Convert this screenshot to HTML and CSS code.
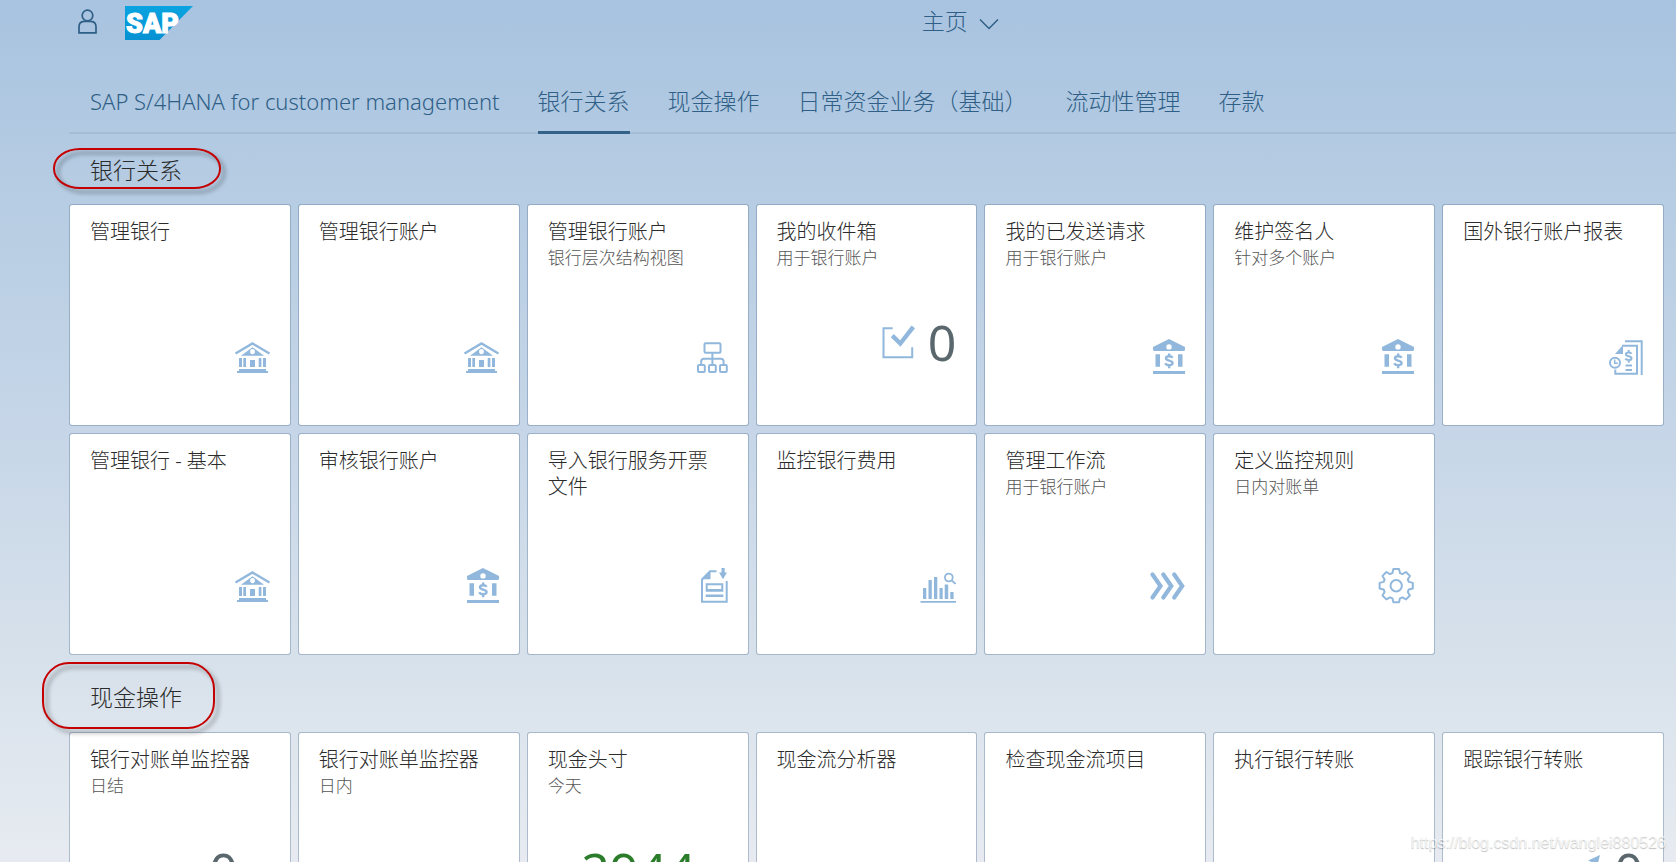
FILE: index.html
```html
<!DOCTYPE html>
<html lang="zh-CN">
<head>
<meta charset="utf-8">
<title>主页</title>
<link rel="stylesheet" href="styles.css">
</head>
<body>
<svg class="sprite" aria-hidden="true">
  <symbol id="bank" viewBox="0 0 36 36">
    <path d="M1.5 14.5 18.5 4.5 35.5 14.5" fill="none" stroke="currentColor" stroke-width="2.4"/>
    <path fill="currentColor" fill-rule="evenodd" d="M7 16.7 18.5 8.2 30 16.7ZM18.5 10a2.4 2.6 0 1 0 0 5.2 2.4 2.6 0 0 0 0-5.2ZM5 19h3v9H5ZM9.3 19h2.7v9H9.3ZM16 21h5v7h-5ZM24.7 19h2.7v9h-2.7ZM29 19h3v9h-3ZM5 30h27v2h2v2H3v-2h2Z"/>
  </symbol>
  <symbol id="bank-dollar" viewBox="0 0 36 36">
    <path fill="currentColor" fill-rule="evenodd" d="M20 0 36 8v2.500Q36 12 34.500 12h-29Q4 12 4 10.500V8ZM20 5.200a2.700 2.700 0 1 0 0 5.400 2.700 2.700 0 0 0 0-5.400ZM6.500 15.300H11v12.400H6.500ZM29 15.300h4.500v12.400H29ZM4 32h32v3H4Z"/>
    <path fill="none" stroke="currentColor" stroke-width="2.400" d="M23.600 18.800C22.500 16.700 17.200 16.500 17 19.200 16.900 22.200 23.700 20.900 23.600 24 23.400 27 17.400 26.700 16.200 24.300M20.200 14.500v2.500M20.200 26v3.200"/>
  </symbol>
  <symbol id="hierarchy" viewBox="0 0 36 36">
    <g fill="none" stroke="currentColor" stroke-width="2">
      <rect x="12.500" y="4.300" width="16" height="9.400" rx="1"/>
      <rect x="6" y="26" width="6.800" height="7" rx="1"/><rect x="17" y="26" width="6.800" height="7" rx="1"/><rect x="28" y="26" width="6.800" height="7" rx="1"/>
      <path d="M20.400 13.700V26M9.200 26v-3.500q0-2.800 2.800-2.800h16.800q2.800 0 2.800 2.800V26"/>
    </g>
  </symbol>
  <symbol id="task" viewBox="0 0 36 36">
    <path fill="none" stroke="currentColor" stroke-width="2" d="M12.700 4.300H3.500v29h28.700v-10"/>
    <path fill="none" stroke="currentColor" stroke-width="4.400" d="M12.300 11.700 20.300 19.500 33.300 2.800"/>
  </symbol>
  <symbol id="report" viewBox="0 0 36 36">
    <g fill="none" stroke="currentColor" stroke-width="2">
      <path d="M18 2.300h16.700V36M15 6.800h15v28H8.300v-4.200"/>
      <circle cx="8" cy="23.700" r="5"/><path stroke-width="1.500" d="M7.700 20.500v3.700h3.200"/>
      <path d="M18.500 26.500h6.500M18.500 31h6.500"/>
      <path d="M24.500 14.700C23.600 13 19.100 12.900 18.900 15.200 18.800 17.700 24.600 16.700 24.500 19.300 24.300 21.800 19.300 21.500 18.300 19.500M21.700 11v2M21.700 21v2.700"/>
    </g>
    <path fill="currentColor" d="M16 6v9H8Z"/>
  </symbol>
  <symbol id="import" viewBox="0 0 36 36">
    <path fill="none" stroke="currentColor" stroke-width="2" d="M24.500 3.200H18L10 11.500v22.300h24.700V13"/>
    <path fill="currentColor" d="M18.500 3v8.300H9.500ZM29.500 0h3.200v4.500H35L31 11.300 27 4.500h2.500ZM13.700 26.500h17.600V29H13.700Z"/>
    <path fill="currentColor" fill-rule="evenodd" d="M13.700 15.300h17.600v8.400H13.700ZM15.700 17.300v3.700h13.600v-3.700Z"/>
  </symbol>
  <symbol id="chart" viewBox="0 0 36 36">
    <path fill="currentColor" d="M3 20h3.300v11H3ZM8.500 12h3.300v19H8.500ZM14 9h3.300v22H14ZM19.500 20h3.200v11h-3.200ZM24.700 16.500h3.500V31h-3.500ZM30.300 24h3.300v7h-3.300ZM.5 33H36v1.800H.5Z"/>
    <g fill="none" stroke="currentColor" stroke-width="1.800"><circle cx="28.800" cy="9.500" r="3.900"/><path d="M31.600 12.300 35.500 15.800"/></g>
  </symbol>
  <symbol id="process" viewBox="0 0 36 36">
    <path fill="none" stroke="currentColor" stroke-width="4.200" stroke-linecap="round" d="M3.500 6.500 11.500 18 3.500 29.500M14.300 6.500 22.300 18 14.300 29.500M25.200 6.500 33.200 18 25.200 29.500"/>
  </symbol>
  <symbol id="gear" viewBox="0 0 36 36">
    <g transform="translate(18.200 17.700)" fill="none" stroke="currentColor" stroke-width="2" stroke-linejoin="round">
      <path d="M-3.800-12.600-2.800-16.600H2.800L3.800-12.600 6.200-11.600 9.800-13.700 13.700-9.800 11.600-6.200 12.600-3.800 16.600-2.800V2.800L12.600 3.800 11.600 6.200 13.700 9.800 9.800 13.700 6.200 11.600 3.800 12.600 2.800 16.600H-2.800L-3.800 12.600-6.200 11.600-9.800 13.700-13.700 9.800-11.600 6.200-12.600 3.800-16.600 2.800V-2.800L-12.600-3.800-11.600-6.200-13.700-9.800-9.800-13.700-6.200-11.600Z"/>
      <circle r="5.700"/>
    </g>
  </symbol>
  <symbol id="track" viewBox="0 0 36 36">
    <path fill="currentColor" d="M34 3 30.500 17l-2.500-6-6-2.500Z"/>
    <path fill="none" stroke="currentColor" stroke-width="2" d="M28 11 8 31"/>
  </symbol>
</svg>

<div class="shell">
  <header class="topbar">
    <div class="topbar-start">
      <button class="icon-button" type="button" aria-label="用户">
        <svg class="user-icon" viewBox="0 0 19 25"><g fill="none" stroke="currentColor" stroke-width="1.700"><circle cx="9.500" cy="6.500" r="5.300"/><path d="M1 23.800v-6Q1 12.800 6 12.300h7q5 .5 5 5.500v6Z"/></g></svg>
      </button>
      <a class="logo-link" href="#home" aria-label="SAP">
        <svg class="logo" viewBox="0 0 68 34">
          <defs><linearGradient id="logo-fill" x1="0" y1="0" x2="0" y2="1"><stop offset="0" stop-color="#0aa3e0"/><stop offset="1" stop-color="#0691d2"/></linearGradient></defs>
          <path fill="url(#logo-fill)" d="M0 0h68L34.500 34H0Z"/>
          <text class="logo-text" x="1" y="27">SAP</text>
        </svg>
      </a>
    </div>
    <button class="page-menu" type="button">主页
      <svg class="chevron" viewBox="0 0 20 12"><path fill="none" stroke="currentColor" stroke-width="1.500" d="M1 1.500 10 10.500 19 1.500"/></svg>
    </button>
  </header>

  <nav class="tabs">
    <a class="tab tab-latin" lang="en" href="#s4hana">SAP S/4HANA for customer management</a>
    <a class="tab tab-active" href="#bank-relations" aria-current="page">银行关系</a>
    <a class="tab" href="#cash">现金操作</a>
    <a class="tab" href="#daily">日常资金业务（基础）</a>
    <a class="tab" href="#liquidity">流动性管理</a>
    <a class="tab" href="#deposits">存款</a>
  </nav>

  <main class="content">
    <section class="group" id="bank-relations">
      <h2 class="group-title">银行关系</h2>
      <div class="tiles">
        <a class="tile" href="#t1"><h3 class="tile-title">管理银行</h3><svg class="tile-icon"><use href="#bank"/></svg></a>
        <a class="tile" href="#t2"><h3 class="tile-title">管理银行账户</h3><svg class="tile-icon"><use href="#bank"/></svg></a>
        <a class="tile" href="#t3"><h3 class="tile-title">管理银行账户</h3><p class="tile-subtitle">银行层次结构视图</p><svg class="tile-icon"><use href="#hierarchy"/></svg></a>
        <a class="tile" href="#t4"><h3 class="tile-title">我的收件箱</h3><p class="tile-subtitle">用于银行账户</p><div class="kpi"><svg class="kpi-icon"><use href="#task"/></svg><span>0</span></div></a>
        <a class="tile" href="#t5"><h3 class="tile-title">我的已发送请求</h3><p class="tile-subtitle">用于银行账户</p><svg class="tile-icon"><use href="#bank-dollar"/></svg></a>
        <a class="tile" href="#t6"><h3 class="tile-title">维护签名人</h3><p class="tile-subtitle">针对多个账户</p><svg class="tile-icon"><use href="#bank-dollar"/></svg></a>
        <a class="tile" href="#t7"><h3 class="tile-title">国外银行账户报表</h3><svg class="tile-icon"><use href="#report"/></svg></a>
        <a class="tile" href="#t8"><h3 class="tile-title">管理银行 - 基本</h3><svg class="tile-icon"><use href="#bank"/></svg></a>
        <a class="tile" href="#t9"><h3 class="tile-title">审核银行账户</h3><svg class="tile-icon"><use href="#bank-dollar"/></svg></a>
        <a class="tile" href="#t10"><h3 class="tile-title">导入银行服务开票文件</h3><svg class="tile-icon"><use href="#import"/></svg></a>
        <a class="tile" href="#t11"><h3 class="tile-title">监控银行费用</h3><svg class="tile-icon"><use href="#chart"/></svg></a>
        <a class="tile" href="#t12"><h3 class="tile-title">管理工作流</h3><p class="tile-subtitle">用于银行账户</p><svg class="tile-icon"><use href="#process"/></svg></a>
        <a class="tile" href="#t13"><h3 class="tile-title">定义监控规则</h3><p class="tile-subtitle">日内对账单</p><svg class="tile-icon"><use href="#gear"/></svg></a>
      </div>
    </section>

    <section class="group group-cash" id="cash">
      <h2 class="group-title group-title-tall">现金操作</h2>
      <div class="tiles">
        <a class="tile" href="#c1"><h3 class="tile-title">银行对账单监控器</h3><p class="tile-subtitle">日结</p><div class="kpi kpi-unit"><span>0</span></div></a>
        <a class="tile" href="#c2"><h3 class="tile-title">银行对账单监控器</h3><p class="tile-subtitle">日内</p></a>
        <a class="tile" href="#c3"><h3 class="tile-title">现金头寸</h3><p class="tile-subtitle">今天</p><div class="kpi kpi-unit kpi-good"><span>2944</span></div></a>
        <a class="tile" href="#c4"><h3 class="tile-title">现金流分析器</h3></a>
        <a class="tile" href="#c5"><h3 class="tile-title">检查现金流项目</h3></a>
        <a class="tile" href="#c6"><h3 class="tile-title">执行银行转账</h3></a>
        <a class="tile" href="#c7"><h3 class="tile-title">跟踪银行转账</h3><div class="kpi"><svg class="kpi-icon"><use href="#track"/></svg><span>0</span></div></a>
      </div>
    </section>
  </main>
  <div class="watermark">https://blog.csdn.net/wanglei880526</div>
</div>
</body>
</html>
```
FILE: styles.css
```css
*, *::after { box-sizing: border-box; }

body {
  margin: 0;
  font-family: "Noto Sans", "Noto Sans CJK SC", sans-serif;
  color: #2b2b2b;
}

.sprite { position: absolute; width: 0; height: 0; }

.shell {
  position: relative;
  display: flex;
  flex-direction: column;
  height: 100vh;
  overflow: hidden;
  background: linear-gradient(#a8c3e0 0%, #b7cde3 24%, #c6d6e8 50%, #d7e1eb 76%, #e7ebf1 100%);
}

.topbar {
  display: grid;
  grid-template-columns: 55% auto;
  align-items: center;
  height: 46px;
  flex: none;
}

.topbar-start {
  display: flex;
  align-items: center;
  gap: 28px;
  padding-left: 78px;
}

.icon-button, .page-menu {
  display: flex;
  align-items: center;
  padding: 0;
  border: 0;
  background: none;
  color: #2f5f86;
  font: inherit;
  cursor: pointer;
}

.icon-button { padding-bottom: 4px; }
.user-icon { width: 19px; height: 25px; }
.logo-link, .logo { display: block; }
.logo { width: 68px; height: 34px; }
.logo-text { font: 900 27px Roboto, sans-serif; fill: #fff; stroke: #fff; stroke-width: 1px; }

.page-menu {
  gap: 11px;
  padding-bottom: 6px;
  font-family: "Noto Sans CJK SC", sans-serif;
  font-size: 23px;
  font-weight: 300;
  line-height: 32px;
}
.chevron { width: 20px; height: 12px; margin-top: 8px; }

.tabs {
  display: flex;
  flex: none;
  gap: 38px;
  height: 88px;
  margin-left: 69px;
  padding-left: 21px;
  border-bottom: 2px solid #a6bdd6;
}

.tab {
  height: 88px;
  padding-top: 37px;
  border-bottom: 3px solid transparent;
  color: #2f5f86;
  font-size: 23px;
  font-weight: 300;
  line-height: 36px;
  text-decoration: none;
  white-space: nowrap;
}
.tab-latin { font-size: 22px; }
.tab-active { border-bottom-color: #346187; }

.content {
  flex: 1;
  min-height: 0;
  padding: 13px 12px 0 69px;
  overflow-y: auto;
  scrollbar-width: none;
}

.group-cash { padding-top: 7px; }

.group-title {
  position: relative;
  margin: 0 0 10px;
  padding-left: 21px;
  font-size: 23px;
  font-weight: 300;
  line-height: 47px;
}

/* hand-drawn style marker around the group name */
.group-title::after {
  content: "";
  position: absolute;
  top: 1px;
  left: -16px;
  width: 168px;
  height: 41px;
  border: 2px solid #c40000;
  border-radius: 27px / 20px;
  filter: drop-shadow(4px 4px 2px rgba(0, 0, 0, .4));
}

.group-title-tall {
  margin-bottom: 0;
  line-height: 70px;
}
.group-title-tall::after {
  top: 0;
  left: -27px;
  width: 173px;
  height: 67px;
  border-radius: 27px;
}

.tiles {
  display: grid;
  grid-template-columns: repeat(auto-fill, minmax(221px, 1fr));
  gap: 7px;
}

.tile {
  display: flex;
  flex-direction: column;
  aspect-ratio: 1;
  padding: 14px 20px 50px;
  border: 1px solid rgba(105, 130, 160, .45);
  border-radius: 3px;
  background: #fff padding-box;
  color: #2b2b2b;
  text-decoration: none;
}

.tile-title {
  margin: 0;
  font-size: 20px;
  font-weight: 300;
  line-height: 26px;
}

.tile-subtitle {
  margin: 0;
  color: #555;
  font-size: 17px;
  font-weight: 300;
  line-height: 26px;
}

.tile-icon {
  width: 36px;
  height: 36px;
  margin-top: auto;
  margin-left: auto;
  color: #91b8dc;
}

.kpi {
  display: flex;
  align-items: center;
  justify-content: flex-end;
  gap: 12px;
  height: 36px;
  margin-top: auto;
  margin-bottom: 15px;
  color: #5a686e;
  font-size: 50px;
  line-height: 36px;
}
.kpi-icon { width: 36px; height: 36px; color: #91b8dc; }
.kpi-unit { padding-right: 32px; }
.kpi-good { color: #2b7d2b; }

.watermark {
  position: absolute;
  right: 10px;
  bottom: 7px;
  color: rgba(255, 255, 255, .75);
  font: 16px/24px "Liberation Sans", sans-serif;
  text-shadow: 0 1px 1px rgba(0, 0, 0, .25);
  pointer-events: none;
}
```
